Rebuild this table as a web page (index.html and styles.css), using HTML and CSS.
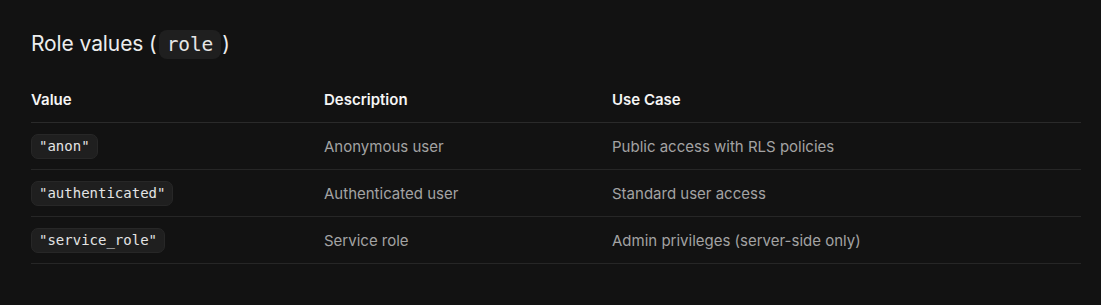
FILE: index.html
```html
<!DOCTYPE html>
<html lang="en">
<head>
<meta charset="utf-8">
<link rel="stylesheet" href="styles.css">
</head>
<body>
<section class="doc">
  <h2 class="title">Role values (<code class="code-lg">role</code>)</h2>
  <table class="roles">
    <thead>
      <tr><th class="c1">Value</th><th class="c2">Description</th><th>Use Case</th></tr>
    </thead>
    <tbody>
      <tr><td><code class="pill">"anon"</code></td><td>Anonymous user</td><td>Public access with RLS policies</td></tr>
      <tr><td><code class="pill">"authenticated"</code></td><td>Authenticated user</td><td>Standard user access</td></tr>
      <tr><td><code class="pill">"service_role"</code></td><td>Service role</td><td>Admin privileges (server-side only)</td></tr>
    </tbody>
  </table>
</section>
</body>
</html>
```
FILE: styles.css
```css
html, body {
  margin: 0;
  background: #121212;
}
body {
  font-family: Inter, "Noto Sans", sans-serif;
  color: #ededed;
}
.doc {
  padding: 28px 20px 0 31px;
}
.title {
  margin: 0 0 30px;
  font-size: 21px;
  font-weight: 400;
  line-height: 32px;
  letter-spacing: -0.1px;
  color: #ededed;
}
.code-lg {
  display: inline-block;
  font-family: "DejaVu Sans Mono", monospace;
  font-size: 19.5px;
  line-height: 29px;
  padding: 0 8px;
  margin: 0 1px 0 2px;
  background: #1f1f1f;
  border-radius: 8px;
  color: #e6e6e6;
}
.roles {
  width: 1050px;
  border-collapse: collapse;
}
.roles th {
  text-align: left;
  font-size: 15px;
  font-weight: 600;
  color: #f5f5f5;
  padding: 0 0 12px;
  line-height: 20px;
  border-bottom: 1px solid #2a2a2a;
}
.roles .c1 { width: 293px; }
.roles .c2 { width: 288px; }
.roles td {
  font-size: 15px;
  color: #a3a3a3;
  padding: 0;
  height: 46px;
  vertical-align: middle;
  border-bottom: 1px solid #262626;
}
.pill {
  display: inline-block;
  font-family: "DejaVu Sans Mono", monospace;
  font-size: 14px;
  line-height: 23px;
  padding: 0 7px;
  background: #1f1f1f;
  border: 1px solid #272727;
  border-radius: 7px;
  color: #e4e4e4;
}
```
